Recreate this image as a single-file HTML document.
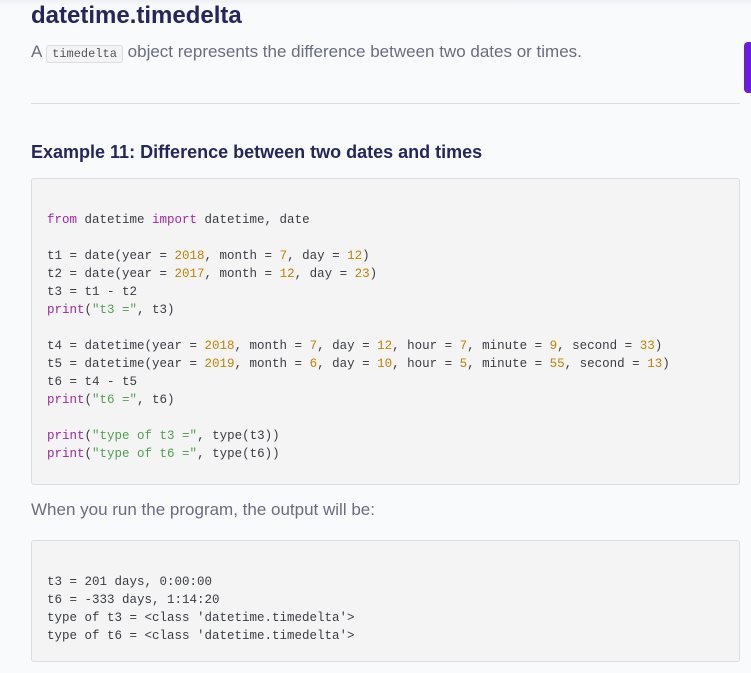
<!DOCTYPE html>
<html><head><style>
body{margin:0;width:751px;height:673px;background:#f9fafc;overflow:hidden;position:relative;font-family:"Liberation Sans",sans-serif}
.a{position:absolute;white-space:pre}
h1{position:absolute;left:31px;top:1px;margin:0;font-size:24px;font-weight:bold;color:#25265e;line-height:30px}
.p{font-size:17px;color:#6a6c84}
code.i{font-family:"Liberation Mono",monospace;font-size:12px;color:#555;background:#f4f4f6;border:1px solid #dcdce3;border-radius:3px;padding:1px 5px}
.box{position:absolute;left:31px;width:707px;background:#f4f4f5;border:1px solid #dcdde2;border-radius:3px}
pre{margin:0;font-family:"Liberation Mono",monospace;font-size:12.5px;line-height:18px;color:#3a3c44;position:absolute;left:15px}
.k{color:#a626a4}.n{color:#c18401}.s{color:#50a14f}
</style></head><body>
<div style="position:absolute;left:0;top:0;width:751px;height:6px;background:linear-gradient(#eef0f4,#f9fafc)"></div>
<h1>datetime.timedelta</h1>
<div class="a p" style="left:31px;top:42px">A <code class="i">timedelta</code> object represents the difference between two dates or times.</div>
<div style="position:absolute;left:744px;top:42px;width:7px;height:51px;background:#6c1ce0;border-radius:4px 0 0 4px"></div>
<div style="position:absolute;left:31px;top:103px;width:709px;height:1px;background:#dcdde4"></div>
<div class="a" style="left:31px;top:142px;font-size:18px;font-weight:bold;color:#25265e">Example 11: Difference between two dates and times</div>
<div class="box" style="top:178px;height:305px"><pre style="top:32px"><span class="k">from</span> datetime <span class="k">import</span> datetime, date

t1 = date(year = <span class="n">2018</span>, month = <span class="n">7</span>, day = <span class="n">12</span>)
t2 = date(year = <span class="n">2017</span>, month = <span class="n">12</span>, day = <span class="n">23</span>)
t3 = t1 - t2
<span class="k">print</span>(<span class="s">"t3 ="</span>, t3)

t4 = datetime(year = <span class="n">2018</span>, month = <span class="n">7</span>, day = <span class="n">12</span>, hour = <span class="n">7</span>, minute = <span class="n">9</span>, second = <span class="n">33</span>)
t5 = datetime(year = <span class="n">2019</span>, month = <span class="n">6</span>, day = <span class="n">10</span>, hour = <span class="n">5</span>, minute = <span class="n">55</span>, second = <span class="n">13</span>)
t6 = t4 - t5
<span class="k">print</span>(<span class="s">"t6 ="</span>, t6)

<span class="k">print</span>(<span class="s">"type of t3 ="</span>, type(t3))
<span class="k">print</span>(<span class="s">"type of t6 ="</span>, type(t6))</pre></div>
<div class="a p" style="left:31px;top:500px">When you run the program, the output will be:</div>
<div class="box" style="top:540px;height:120px"><pre style="top:32px">t3 = 201 days, 0:00:00
t6 = -333 days, 1:14:20
type of t3 = &lt;class 'datetime.timedelta'&gt;
type of t6 = &lt;class 'datetime.timedelta'&gt;</pre></div>
</body></html>
